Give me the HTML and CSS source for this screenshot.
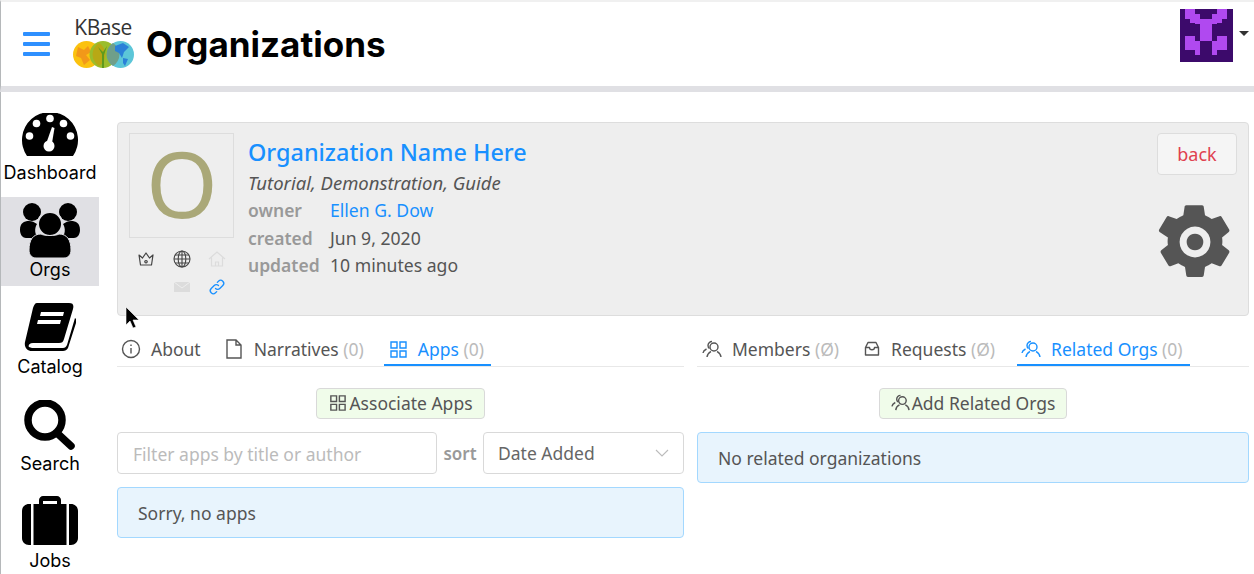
FILE: index.html
```html
<!DOCTYPE html>
<html lang="en">
<head>
  <meta charset="UTF-8">
  <title>Organizations</title>
  <link rel="stylesheet" href="styles.css">
</head>
<body>
  <div id="header">
    <button class="menu-button" aria-label="menu"><span></span><span></span><span></span></button>
    <div class="logo">
      <span class="logo-text">KBase</span>
      <svg class="logo-globes" viewBox="0 0 61 27" width="61" height="27">
        <circle cx="13.5" cy="13.5" r="13.5" fill="#fbc20f"/>
        <path d="M5 6l6 3 4-4 3 6-5 3 4 5-6 5-3-7-5-2z" fill="#ef8a1d" opacity=".75"/>
        <circle cx="30" cy="13.5" r="13.5" fill="#9bbd2c"/>
        <circle cx="47.5" cy="13.5" r="13.5" fill="#5cc6d8"/>
        <path d="M26 2a13.5 13.5 0 0 0 0 23 13.5 13.5 0 0 0 0-23z" fill="#b8a815"/>
        <path d="M40 2a13.5 13.5 0 0 0 0 23 13.5 13.5 0 0 0 0-23z" fill="#6f9f8a"/>
        <path d="M29 27V13l-4-7 5 5 4-6-3 9v13z" fill="#5f9a1e"/>
        <path d="M42 5l8-3 6 4-5 5-2 6-3-5-4-2zM50 17l5 1-3 7-2-3z" fill="#2a80d8"/>
      </svg>
    </div>
    <h1 class="page-title">Organizations</h1>
    <div class="user-menu">
      <svg class="avatar" viewBox="0 0 158 158" width="53" height="53" shape-rendering="crispEdges">
        <rect width="158" height="158" fill="#3c0a6b"/>
        <g fill="#b049f0">
          <rect x="15" y="0" width="30" height="30"/>
          <rect x="110" y="0" width="30" height="30"/>
          <rect x="30" y="15" width="30" height="28"/>
          <rect x="95" y="15" width="30" height="28"/>
          <rect x="45" y="30" width="65" height="15"/>
          <rect x="60" y="40" width="35" height="55"/>
          <rect x="15" y="80" width="30" height="42"/>
          <rect x="45" y="95" width="15" height="42"/>
          <rect x="110" y="80" width="30" height="42"/>
          <rect x="95" y="95" width="15" height="42"/>
        </g>
      </svg>
      <span class="caret"></span>
    </div>
  </div>

  <div id="page">
    <div id="sidebar">
      <a class="nav-item nav-dash">
        <div class="nav-icon">
          <svg viewBox="0 0 56 44" width="56" height="44">
            <path d="M5 43A28 28 0 1 1 51 43z"/>
            <g fill="#fff">
              <circle cx="28" cy="5.500" r="3.800"/>
              <circle cx="14.500" cy="10.500" r="3.800"/>
              <circle cx="41.500" cy="10.500" r="3.800"/>
              <circle cx="7.500" cy="23" r="3.800"/>
              <circle cx="48.500" cy="23" r="3.800"/>
              <circle cx="27" cy="33" r="5.500"/>
              <path d="M24 31l6-17 2.500 1-3 18z"/>
            </g>
          </svg>
        </div>
        <span>Dashboard</span>
      </a>
      <a class="nav-item nav-active">
        <div class="nav-icon">
          <svg viewBox="0 0 60 56" width="60" height="56">
            <circle cx="12" cy="10" r="9"/>
            <circle cx="48" cy="10" r="9"/>
            <path d="M0 28c0-7 4-9 9-9 3 0 5 1 8 3-3 5-2 10 1 14H6c-3 0-6-3-6-8zM60 28c0-7-4-9-9-9-3 0-5 1-8 3 3 5 2 10-1 14h12c3 0 6-3 6-8z"/>
            <circle cx="30" cy="22" r="12" stroke="#e0e0e4" stroke-width="2"/>
            <path d="M9 48c0-10 4-16 12-16 3 2 15 2 18 0 8 0 12 6 12 16 0 5-3 8-7 8H16c-4 0-7-3-7-8z" stroke="#e0e0e4" stroke-width="1"/>
          </svg>
        </div>
        <span>Orgs</span>
      </a>
      <a class="nav-item">
        <div class="nav-icon">
          <svg viewBox="0 0 52 48" width="52" height="48">
            <path fill-rule="evenodd" d="M13 0h32c4 0 5 2 4 6l-9 30c-1 3-2 4-5 4H9c-4 0-5 3-4 4 1 0 2 1 3 1h31c2 0 3-1 4-3l8-27 1 1c1 1 0 3 0 4l-8 25c-1 2-3 3-5 3H8c-5 0-8-4-7-9L9 5c1-3 2-5 4-5zM17 9l-1 4h23l1-4zM14 17l-1 4h23l1-4z"/>
          </svg>
        </div>
        <span>Catalog</span>
      </a>
      <a class="nav-item nav-search">
        <div class="nav-icon">
          <svg viewBox="0 0 52 50" width="52" height="50">
            <circle cx="21" cy="20" r="17" fill="none" stroke="#000" stroke-width="7.500"/>
            <path d="M33 33l14 13" stroke="#000" stroke-width="7.500" stroke-linecap="round"/>
          </svg>
        </div>
        <span>Search</span>
      </a>
      <a class="nav-item">
        <div class="nav-icon">
          <svg viewBox="0 0 56 50" width="56" height="50">
            <path d="M17 8V4c0-2 2-4 4-4h14c2 0 4 2 4 4v4h-4V5H21v3z"/>
            <path d="M9 8v41H7c-4 0-7-3-7-7V15c0-4 3-7 7-7zM11.500 8h33v41h-33zM47 8h2c4 0 7 3 7 7v27c0 4-3 7-7 7h-2z"/>
          </svg>
        </div>
        <span>Jobs</span>
      </a>
    </div>

    <div id="content">
      <div class="org-card">
        <div class="org-left">
          <div class="org-logo">O</div>
          <div class="org-icons">
            <svg viewBox="0 0 18 18"><path d="M2 5l3.500 3L9 3l3.500 5L16 5l-1.500 10h-11zM9 10.500a1.200 1.200 0 1 0 .01 0" fill="none" stroke="#444" stroke-width="1.200" stroke-linejoin="round"/></svg>
            <svg viewBox="0 0 18 18" fill="none" stroke="#444" stroke-width="1.100"><circle cx="9" cy="9" r="8"/><ellipse cx="9" cy="9" rx="3.800" ry="8"/><path d="M9 1v16M1 9h16M2 5h14M2 13h14"/></svg>
            <svg viewBox="0 0 18 18" fill="none" stroke="#dcdcdc" stroke-width="1.200"><path d="M1 9l8-7 8 7M3.500 7.500V16h11V7.500M7.500 16v-4h3v4"/></svg>
            <span></span>
            <svg viewBox="0 0 18 18"><path d="M1 4h16v10H1z" fill="#dcdcdc"/><path d="M1 4l8 6 8-6" fill="none" stroke="#eee"/></svg>
            <svg viewBox="0 0 18 18" fill="none" stroke="#1890ff" stroke-width="1.300" stroke-linecap="round"><path d="M7.500 10.500a3 3 0 0 0 4.300 0l3-3a3 3 0 0 0-4.300-4.300l-1.200 1.200M10.500 7.500a3 3 0 0 0-4.300 0l-3 3a3 3 0 0 0 4.300 4.300l1.200-1.200"/></svg>
          </div>
        </div>
        <div class="org-info">
          <a class="org-name">Organization Name Here</a>
          <div class="org-tags">Tutorial, Demonstration, Guide</div>
          <div class="org-row"><span class="org-label">owner</span><a class="org-owner">Ellen G. Dow</a></div>
          <div class="org-row"><span class="org-label">created</span><span>Jun 9, 2020</span></div>
          <div class="org-row"><span class="org-label">updated</span><span>10 minutes ago</span></div>
        </div>
        <div class="org-actions">
          <button class="back-button">back</button>
          <svg class="gear" viewBox="0 0 24 24" width="100" height="100"><path fill="#555" fill-rule="evenodd" d="M13.700 3.200c.2 0 .4.200.4.400l.3 2c.6.300 1.100.500 1.600.900l1.900-.7c.2-.1.400 0 .5.200l1.800 3c.1.200.1.400-.1.600l-1.600 1.300c.1.600.1 1.200 0 1.800l1.600 1.300c.2.200.2.400.1.600l-1.800 3c-.1.200-.3.300-.5.200l-1.900-.7c-.5.400-1 .6-1.600.9l-.3 2c0 .2-.2.400-.4.400h-3.400c-.2 0-.4-.2-.4-.4l-.3-2c-.6-.3-1.100-.5-1.600-.9l-1.900.7c-.2.100-.4 0-.5-.2l-1.800-3c-.1-.2-.1-.4.100-.6l1.600-1.300c-.1-.6-.1-1.200 0-1.800L3.500 9.600c-.2-.2-.2-.4-.1-.6l1.800-3c.1-.2.300-.3.500-.2l1.900.7c.5-.4 1-.6 1.600-.9l.3-2c0-.2.200-.4.400-.4zM12 8.300a3.700 3.700 0 1 0 .01 0zM12 10a2 2 0 1 1-.01 0z"/></svg>
        </div>
      </div>

      <div class="columns">
        <div class="column column-left">
          <div class="tabs">
            <a class="tab tab-about"><svg class="tab-icon" viewBox="0 0 20 20" fill="none" stroke="currentColor" stroke-width="1.400"><circle cx="10" cy="10" r="8.500"/><path d="M10 9v5.500M10 5.500v1.500"/></svg>About</a>
            <a class="tab"><svg class="tab-icon" viewBox="0 0 20 20" fill="none" stroke="currentColor" stroke-width="1.400"><path d="M3 1h9l5 5v13H3zM12 1v5h5"/></svg>Narratives <span class="count">(0)</span></a>
            <a class="tab tab-active"><svg class="tab-icon" viewBox="0 0 20 20" fill="none" stroke="currentColor" stroke-width="1.400"><path d="M3 3h6v6H3zM12 3h6v6h-6zM3 12h6v6H3zM12 12h6v6h-6z"/></svg>Apps <span class="count">(0)</span></a>
          </div>
          <div class="action-row">
            <button class="green-button"><svg viewBox="0 0 20 20" fill="none" stroke="currentColor" stroke-width="1.500"><path d="M3 3h6v6H3zM12 3h6v6h-6zM3 12h6v6H3zM12 12h6v6h-6z"/></svg>Associate Apps</button>
          </div>
          <div class="filter-row">
            <div class="filter-input">Filter apps by title or author</div>
            <span class="sort-label">sort</span>
            <div class="sort-select">Date Added
              <svg viewBox="0 0 14 8" width="14" height="8" fill="none" stroke="#bbb" stroke-width="1.100"><path d="M1 1l6 6 6-6"/></svg>
            </div>
          </div>
          <div class="alert">Sorry, no apps</div>
        </div>

        <div class="column column-right">
          <div class="tabs">
            <a class="tab"><svg class="tab-icon" viewBox="0 0 20 20" fill="none" stroke="currentColor" stroke-width="1.400"><circle cx="12" cy="8" r="4"/><path d="M5 18c.5-4 3-5 4-5.500M19 18c-.5-4-3-5-4-5.500M10 2.500a4 4 0 0 0-4 4c0 1.500.8 2.500 1.500 3M1 14c.3-2 1.500-3 3.500-4"/></svg>Members <span class="count">(Ø)</span></a>
            <a class="tab"><svg class="tab-icon" viewBox="0 0 20 20" fill="none" stroke="currentColor" stroke-width="1.400" stroke-linejoin="round"><path d="M7 3.500h8l2.500 5v7.500h-13V8.500zM4.500 8.500h4c0 3 5 3 5 0h4"/></svg>Requests <span class="count">(Ø)</span></a>
            <a class="tab tab-active"><svg class="tab-icon" viewBox="0 0 20 20" fill="none" stroke="currentColor" stroke-width="1.400"><circle cx="12" cy="8" r="4"/><path d="M5 18c.5-4 3-5 4-5.500M19 18c-.5-4-3-5-4-5.500M10 2.500a4 4 0 0 0-4 4c0 1.500.8 2.500 1.500 3M1 14c.3-2 1.500-3 3.500-4"/></svg>Related Orgs <span class="count">(0)</span></a>
          </div>
          <div class="action-row">
            <button class="green-button"><svg viewBox="0 0 20 20" fill="none" stroke="currentColor" stroke-width="1.500"><circle cx="12" cy="8" r="4"/><path d="M5 18c.5-4 3-5 4-5.500M19 18c-.5-4-3-5-4-5.500M10 2.500a4 4 0 0 0-4 4c0 1.500.8 2.500 1.500 3M1 14c.3-2 1.500-3 3.500-4"/></svg>Add Related Orgs</button>
          </div>
          <div class="alert">No related organizations</div>
        </div>
      </div>
    </div>
  </div>

  <svg class="cursor" viewBox="0 0 14 22" width="14" height="22"><path d="M1 0v18l4-4 3 7 3-1-3-7h6z" fill="#000" stroke="#fff" stroke-width=".6"/></svg>
</body>
</html>
```

FILE: styles.css
```css
html, body {
  height: 574px;
  overflow: hidden;
}
body {
  margin: 0;
  font-family: "Noto Sans", sans-serif;
  color: #555;
  background: #fff;
  position: relative;
}
a, button {
  font-family: inherit;
}

#header {
  display: flex;
  align-items: center;
  height: 84px;
  border-top: 2px solid #f0f0f0;
  border-bottom: 6px solid #e0e0e4;
  border-left: 1px solid #b5b8ba;
  padding-right: 5px;
}
.menu-button {
  display: flex;
  flex-direction: column;
  gap: 6px;
  width: 27px;
  padding: 0;
  margin: 0 0 0 22px;
  background: none;
  border: none;
}
.menu-button span {
  display: block;
  height: 4px;
  border-radius: 1px;
  background: #2e90ff;
}
.logo {
  display: flex;
  flex-direction: column;
  align-items: center;
  margin-left: 22px;
  width: 62px;
}
.logo-text {
  font-family: "Open Sans", sans-serif;
  font-size: 21px;
  line-height: 21px;
  margin-bottom: 3px;
  margin-top: -3px;
  color: #333;
  letter-spacing: -0.5px;
}
.page-title {
  margin: 0 0 0 12px;
  font-family: Inter, sans-serif;
  font-size: 35px;
  font-weight: 700;
  color: #000;
  flex: 1;
}
.user-menu {
  display: flex;
  align-items: center;
  gap: 6px;
  margin-top: -17px;
}
.avatar {
  display: block;
}
.caret {
  width: 0;
  height: 0;
  border-left: 5px solid transparent;
  border-right: 5px solid transparent;
  border-top: 5px solid #333;
  margin-top: -5px;
}

#page {
  display: flex;
}
#sidebar {
  width: 99px;
  flex: none;
  display: flex;
  flex-direction: column;
  gap: 8px;
  padding-top: 8px;
  border-left: 1px solid #b5b8ba;
  height: 500px;
  box-sizing: border-box;
}
.nav-item {
  height: 89px;
  flex: none;
  display: flex;
  flex-direction: column;
  align-items: center;
  font-family: Inter, sans-serif;
  font-size: 18px;
  color: #000;
}
.nav-icon {
  height: 65px;
  display: flex;
  align-items: center;
}
.nav-icon svg {
  display: block;
}
.nav-dash svg {
  margin-top: 5px;
}
.nav-search svg {
  margin-top: 3px;
}
.nav-item span {
  line-height: 16px;
}
.nav-active {
  background: #e0e0e4;
}

#content {
  flex: 1;
  padding: 30px 5px 0 18px;
  min-width: 0;
}
.org-card {
  display: flex;
  height: 194px;
  box-sizing: border-box;
  background: #eee;
  border: 1px solid #ddd;
  border-radius: 4px;
  padding: 10px 11px;
}
.org-left {
  width: 105px;
  flex: none;
}
.org-logo {
  height: 105px;
  box-sizing: border-box;
  border: 1px solid #ddd;
  padding-left: 1px;
  font-size: 92px;
  line-height: 98px;
  text-align: center;
  color: #aaa878;
}
.org-icons {
  display: grid;
  grid-template-columns: repeat(3, 18px);
  column-gap: 17.5px;
  row-gap: 10px;
  padding: 12px 0 0 8px;
}
.org-icons svg {
  width: 18px;
  height: 18px;
  display: block;
}
.org-info {
  flex: 1;
  margin: 1px 0 0 14px;
  font-size: 17.6px;
  line-height: 27.500px;
}
.org-name {
  display: block;
  font-size: 23.400px;
  font-weight: 500;
  line-height: 36px;
  color: #1890ff;
}
.org-tags {
  font-size: 18.500px;
  font-style: italic;
  color: #555;
  line-height: 26px;
  margin-bottom: 1px;
}
.org-row {
  display: flex;
}
.org-label {
  width: 82px;
  font-size: 17.500px;
  font-weight: 600;
  color: #999;
}
.org-owner {
  color: #1890ff;
}
.org-actions {
  display: flex;
  flex-direction: column;
  align-items: flex-end;
}
.back-button {
  width: 80px;
  height: 42px;
  font-size: 18px;
  color: #e0404f;
  background: #f5f5f5;
  border: 1px solid #ddd;
  border-radius: 4px;
}
.gear {
  margin-top: 17px;
  margin-right: -8px;
}

.columns {
  display: flex;
  gap: 13px;
  margin-top: 16px;
}
.column {
  min-width: 0;
}
.column-left {
  flex: 0 0 567px;
}
.column-right {
  flex: 1;
}
.tabs {
  display: flex;
  gap: 20px;
  height: 34px;
  padding-left: 4px;
  border-bottom: 1px solid #e8e8e8;
}
.column-right .tabs {
  padding-left: 5px;
  gap: 22px;
}
.tab {
  display: flex;
  align-items: center;
  height: 34px;
  box-sizing: border-box;
  font-size: 17.500px;
  color: #555;
  white-space: pre;
}
.tab-about {
  padding-right: 3px;
}
.tab-icon {
  width: 20px;
  height: 20px;
  margin-right: 10px;
}
.count {
  color: #bbb;
}
.tab-active {
  color: #1890ff;
  border-bottom: 2px solid #1890ff;
  padding: 2px 7px 0 4px;
}
.action-row {
  display: flex;
  justify-content: center;
  margin-top: 21px;
}
.green-button {
  display: flex;
  align-items: center;
  height: 31px;
  padding: 0 11px 2px;
  font-size: 17.500px;
  color: #555;
  background: #f0fcea;
  border: 1px solid #d9d9d9;
  border-radius: 4px;
}
.green-button svg {
  width: 19px;
  height: 19px;
  margin-right: 2px;
}
.filter-row {
  display: flex;
  align-items: center;
  margin-top: 13px;
  height: 42px;
}
.filter-input, .sort-select {
  height: 42px;
  box-sizing: border-box;
  border: 1px solid #d9d9d9;
  border-radius: 4px;
  display: flex;
  align-items: center;
  padding: 0 14px;
  font-size: 17.500px;
}
.filter-input {
  width: 320px;
  padding: 2px 15px 0;
  color: #bbb;
}
.sort-label {
  width: 46px;
  text-align: center;
  font-size: 17px;
  font-weight: 600;
  color: #999;
}
.sort-select {
  flex: 1;
  justify-content: space-between;
  color: #666;
}
.alert {
  margin-top: 13px;
  height: 51px;
  box-sizing: border-box;
  background: #e8f4fd;
  border: 1px solid #a3d8ff;
  border-radius: 4px;
  padding: 0 20px;
  display: flex;
  align-items: center;
  font-size: 17.500px;
}
.cursor {
  position: absolute;
  left: 125px;
  top: 307px;
}
```
